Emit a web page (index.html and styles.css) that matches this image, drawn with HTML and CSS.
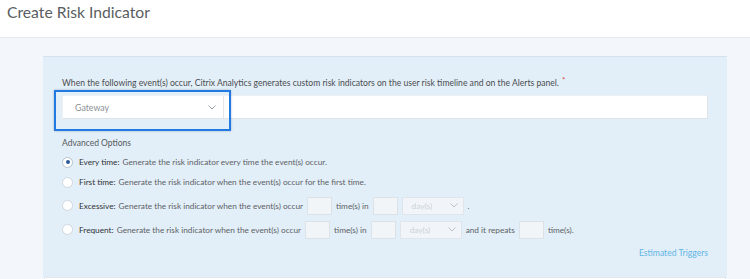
FILE: index.html
```html
<!DOCTYPE html>
<html lang="en">
<head>
<meta charset="utf-8">
<title>Create Risk Indicator</title>
<link rel="stylesheet" href="styles.css">
</head>
<body>
<header class="top">
  <h1 class="title">Create Risk Indicator</h1>
</header>
<main class="page">
  <section class="panel">
    <p class="desc">When the following event(s) occur, Citrix Analytics generates custom risk indicators on the user risk timeline and on the Alerts panel.<span class="req">*</span></p>
    <div class="event-field">
      <div class="select-wrap">
        <div class="select">
          <span class="select-value">Gateway</span>
          <svg class="chev" width="8" height="5" viewBox="0 0 8 5"><path d="M0.5 0.5 L4 4 L7.5 0.5" fill="none" stroke="#9aa3ab" stroke-width="1"/></svg>
        </div>
        <div class="focus-ring"></div>
      </div>
      <div class="field-rest"></div>
    </div>
    <p class="adv">Advanced Options</p>
    <div class="options">
      <div class="opt">
        <span class="radio checked"></span>
        <span class="lbl">Every time:</span>
        <span class="txt">Generate the risk indicator every time the event(s) occur.</span>
      </div>
      <div class="opt">
        <span class="radio"></span>
        <span class="lbl">First time:</span>
        <span class="txt">Generate the risk indicator when the event(s) occur for the first time.</span>
      </div>
      <div class="opt opt-inputs opt-ex">
        <span class="radio"></span>
        <span class="lbl">Excessive:</span>
        <span class="txt">Generate the risk indicator when the event(s) occur</span>
        <span class="box"></span>
        <span class="txt">time(s) in</span>
        <span class="box"></span>
        <span class="dd"><span class="dd-val">day(s)</span><svg class="chev" width="8" height="5" viewBox="0 0 8 5"><path d="M0.5 0.5 L4 4 L7.5 0.5" fill="none" stroke="#b9c2ca" stroke-width="1"/></svg></span>
        <span class="txt">.</span>
      </div>
      <div class="opt opt-inputs opt-fr">
        <span class="radio"></span>
        <span class="lbl">Frequent:</span>
        <span class="txt">Generate the risk indicator when the event(s) occur</span>
        <span class="box"></span>
        <span class="txt">time(s) in</span>
        <span class="box"></span>
        <span class="dd"><span class="dd-val">day(s)</span><svg class="chev" width="8" height="5" viewBox="0 0 8 5"><path d="M0.5 0.5 L4 4 L7.5 0.5" fill="none" stroke="#b9c2ca" stroke-width="1"/></svg></span>
        <span class="txt">and it repeats</span>
        <span class="box"></span>
        <span class="txt">time(s).</span>
      </div>
    </div>
    <div class="est"><a class="est-link" href="#">Estimated Triggers</a></div>
  </section>
  <section class="next"></section>
</main>
</body>
</html>
```
FILE: styles.css
```css
* { box-sizing: border-box; }
html, body { margin: 0; padding: 0; }
body {
  font-family: Lato, "Open Sans", sans-serif;
  background: #f3f6fa;
  color: #444;
  width: 750px;
  height: 279px;
  overflow: hidden;
}
.top {
  height: 38px;
  background: #fff;
  border-bottom: 1px solid #e4e8ec;
}
.title {
  margin: 0;
  padding: 0 0 0 7px;
  font-size: 15.7px;
  font-weight: normal;
  line-height: 24px;
  color: #5a5d61;
}
.page {
  padding: 18px 23px 0 43px;
}
.panel {
  background: #e3eff8;
  border-top: 1px solid #d3e2ee;
  padding: 19px 19px 17px 19px;
}
.desc {
  margin: 0;
  font-size: 8.6px;
  line-height: 14px;
  color: #4a4d50;
  white-space: nowrap;
}
.req {
  color: #e0483c;
  font-size: 8px;
  position: relative;
  top: -3px;
  margin-left: 3px;
}
.event-field {
  margin-top: 5px;
  height: 24px;
  display: flex;
  background: #fff;
  border: 1px solid #dfe4e8;
  border-top-color: #eef1f3;
  border-left-color: #eef1f3;
}
.select-wrap {
  position: relative;
  width: 161px;
  flex: none;
}
.select {
  height: 100%;
  display: flex;
  align-items: center;
  justify-content: space-between;
  padding: 0 7px 0 12px;
  border-right: 1px solid #e3e7ea;
}
.select-value {
  font-size: 8.8px;
  color: #8b9095;
}
.focus-ring {
  position: absolute;
  left: -9px;
  top: -6px;
  width: 177px;
  height: 41px;
  border: 2px solid #2379e2;
  box-shadow: 0 0 2px rgba(30, 60, 110, 0.35);
  pointer-events: none;
}
.field-rest { flex: 1; }
.adv {
  margin: 17px 0 0 0;
  font-size: 8.5px;
  line-height: 14px;
  color: #55595d;
}
.options {
  margin-top: 2px;
  display: flex;
  flex-direction: column;
}
.opt {
  display: flex;
  align-items: center;
  height: 20px;
  font-size: 8.25px;
  white-space: nowrap;
}
.opt-inputs { height: 19px; }
.opt-ex { margin-top: 4px; }
.opt-fr { margin-top: 5px; }
.radio {
  width: 11px;
  height: 11px;
  border-radius: 50%;
  background: #fff;
  border: 1px solid #cfd6dd;
  margin-right: 6px;
  flex: none;
  display: flex;
  align-items: center;
  justify-content: center;
}
.radio.checked { border-color: #b6c2cd; }
.radio.checked::after {
  content: "";
  width: 4px;
  height: 4px;
  border-radius: 50%;
  background: #2c5c98;
}
.lbl {
  color: #2f3235;
  margin-right: 3px;
}
.txt { color: #5c6166; }
.box {
  width: 25px;
  height: 18px;
  background: #f1f5f8;
  border: 1px solid #dbe2e8;
  margin: 0 4px 0 3px;
  flex: none;
}
.txt + .box { margin-left: 4px; }
.dd {
  width: 62px;
  height: 18px;
  background: #f1f5f9;
  border: 1px solid #dfe5ea;
  display: flex;
  align-items: center;
  justify-content: space-between;
  padding: 0 5px 0 9px;
  margin-right: 4px;
  flex: none;
}
.dd-val {
  color: #c9d1d8;
  font-size: 8.3px;
}
.est {
  margin-top: 4px;
  text-align: right;
  line-height: 14px;
}
.est-link {
  font-size: 8.6px;
  color: #62b5e5;
  text-decoration: none;
}
.next {
  height: 10px;
  background: #fff;
  border: 1px solid #e0e6ec;
  margin: 0 1px;
}
```
